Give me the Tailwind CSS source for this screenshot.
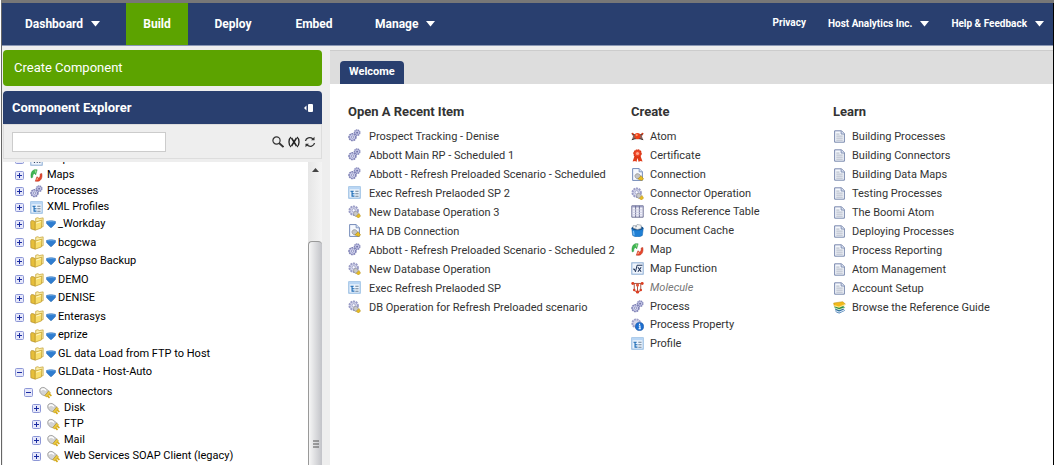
<!DOCTYPE html>
<html lang="en">
<head>
<meta charset="utf-8">
<title>Build</title>
<script src="https://cdn.jsdelivr.net/npm/@tailwindcss/browser@4"></script>
</head>
<body class="bg-white font-['Roboto','Liberation_Sans',sans-serif] text-[11px] text-[#333]">
<svg class="hidden" aria-hidden="true">
  <symbol id="gears" viewBox="0 0 16 16">
    <circle cx="11.200" cy="4.500" r="3.300" fill="#c3c5e6" stroke="#8487ba" stroke-width="1.800" stroke-dasharray="1.700 .6"/>
    <circle cx="5.500" cy="10" r="4.200" fill="#cdcfeb" stroke="#8083b6" stroke-width="2" stroke-dasharray="2.200 .8"/>
    <circle cx="11.200" cy="4.500" r="1.100" fill="#6a6da3"/><circle cx="5.500" cy="10" r="1.400" fill="#f2f2fb" stroke="#7477ad" stroke-width=".8"/>
  </symbol>
  <symbol id="profile" viewBox="0 0 16 16">
    <rect x="1" y="1" width="14" height="14" fill="#eaf3fd" stroke="#86b2de" stroke-width="1.200"/>
    <path d="M1 1h14v3H1z" fill="#b9d6f4"/>
    <path d="M3 6.500h4M5 6.500v6h3M5 9.500h3" stroke="#1d6bb5" stroke-width="1.400" fill="none"/>
    <path d="M9 6.500h4M9 9.500h4M9 12.500h4" stroke="#6d8298" stroke-width="1.300"/>
  </symbol>
  <symbol id="plug" viewBox="0 0 16 16">
    <path d="M.8 5.500c0-3 3-4.500 6-3.500L12 6l-5 6C3 11 .8 8.500.8 5.500z" fill="#d3d3d3" stroke="#9a9a9a"/>
    <path d="M2.500 5.500C4 3 6 3.500 8.500 5.500" stroke="#fff" stroke-width="1.800" fill="none"/>
    <path d="M7 12l5-6 2.200 2.500-4.500 5z" fill="#ecc93a" stroke="#a4841a" stroke-width=".6"/>
    <path d="M12.500 10l2.800 2.300M10.500 12.200l2.500 2.500" stroke="#d6aa18" stroke-width="2"/>
  </symbol>
  <symbol id="operation" viewBox="0 0 16 16">
    <circle cx="7" cy="7" r="5.200" fill="#d4d6ea" stroke="#9a9cc6" stroke-width="2.400" stroke-dasharray="2.400 .9"/>
    <circle cx="7" cy="6.500" r="2" fill="#fafaff" stroke="#9a9cc4"/>
    <path d="M7 9.500c1-2 3-2 4.500-.5L13 11l-3 3c-2 0-3.500-2-3-4.500z" fill="#c8c8c8" stroke="#858585" stroke-width=".7"/>
    <path d="M10 14l3.500-3.500 2 3L13 16z" fill="#e8bd22" stroke="#a47e10" stroke-width=".5"/>
  </symbol>
  <symbol id="connection" viewBox="0 0 16 16">
    <path d="M2 .7h8l4 4v10.600H2z" fill="#f6f9fe" stroke="#7189b8" stroke-width="1.200"/>
    <path d="M10 .7v4h4" fill="#d5e0f2" stroke="#7189b8"/>
    <path d="M5 9c1-2.500 4-2.500 5.500-1L12 10l-3.500 3.500C6 13 4.500 11 5 9z" fill="#c5c5c5" stroke="#858585" stroke-width=".8"/>
    <path d="M8.500 13.500L12.500 9.500l3 4-2.500 2z" fill="#e8bd22" stroke="#a47e10" stroke-width=".6"/>
  </symbol>
  <symbol id="map" viewBox="0 0 16 16">
    <path d="M5.500.8C2 2 .5 5.500 1.500 11l1.800-.8C3.200 7.500 4 6 5.500 5.500L7 7.200 8.800 1z" fill="#3fb653" stroke="#23913a" stroke-width=".6"/>
    <path d="M5.500 1.500l2.600.2-1.200 3.800z" fill="#9be08f"/>
    <path d="M10 15.200c3.800-1 5.500-4.700 4.500-9.700l-2 .6c.2 2.900-.5 4.400-2 5L8.500 9.500 6.500 15z" fill="#e6452c" stroke="#b42c14" stroke-width=".6"/>
    <path d="M7.500 14.300l1.300-3.500 1.700 1.500z" fill="#ffb08d"/>
  </symbol>
  <symbol id="folder" viewBox="0 0 16 16">
    <path d="M6.500 1.500l2.500-.7 1.500 1L15 1v10l-8.500 2z" fill="#fbeea6" stroke="#c8a53e" stroke-width=".9"/>
    <path d="M.8 5.500l1-1.500 3.200.5 1 1.500V15L1 13.500z" fill="#e6be3a" stroke="#b08d28" stroke-width=".8"/>
    <path d="M6 5.800L13.500 3.500 13 12.500 6 15z" fill="#f8de6c" stroke="#c09b2c" stroke-width=".8"/>
    <path d="M7 7l5.300-1.700" stroke="#fffbd9"/>
  </symbol>
  <symbol id="drop" viewBox="0 0 10 8">
    <path d="M.5 1.500C2.500.6 7.500.6 9.500 1.500c.3 1.500-.2 2.500-1 3L5.800 7.300c-.5.400-1.100.4-1.600 0L1.500 4.500c-.8-.5-1.300-1.500-1-3z" fill="#2f7dd0" stroke="#2364ae" stroke-width=".5"/>
    <path d="M1.500 1.900c2-.5 5-.5 7 0" stroke="#6aa8e6" stroke-width=".8" fill="none"/>
  </symbol>
  <symbol id="plus" viewBox="0 0 9 9">
    <rect x=".5" y=".5" width="8" height="8" rx="1" fill="#e6e8fa" stroke="#8d97d6"/>
    <path d="M2 4.500h5M4.500 2v5" stroke="#1a2ba0"/>
  </symbol>
  <symbol id="minus" viewBox="0 0 9 9">
    <rect x=".5" y=".5" width="8" height="8" rx="1" fill="#e6e8fa" stroke="#8d97d6"/>
    <path d="M2 4.500h5" stroke="#1a2ba0"/>
  </symbol>
  <symbol id="atom" viewBox="0 0 16 16">
    <path d="M1 4l4 1.500h6L15 4l-1.500 4 1.500 4-4-1H5l-4 1 1.500-4z" fill="#6b4038" opacity=".8"/>
    <path d="M1 4.500c4 2.500 10 2.500 14 0M1 12c4-2 10-2 14 0" stroke="#3f3431" stroke-width="1.200" fill="none"/>
    <circle cx="8" cy="7.500" r="3.800" fill="#ee4119"/><circle cx="7" cy="6.300" r="1.400" fill="#ff9c6b"/>
    <circle cx="2" cy="4.500" r="1.200" fill="#dc3b16"/><circle cx="14" cy="4.500" r="1.200" fill="#dc3b16"/>
  </symbol>
  <symbol id="certificate" viewBox="0 0 16 16">
    <path d="M4.500 8L2 15.500l3.200-.8 1.500 1.300L8 11l1.500 5 1.700-1.300 3 .8L11.500 8z" fill="#e03c1a"/>
    <circle cx="8" cy="5.500" r="4.400" fill="#f0482a" stroke="#d5300f" stroke-width="1.600" stroke-dasharray="2 .6"/>
    <circle cx="8" cy="5.500" r="1.900" fill="#ffa88d"/>
  </symbol>
  <symbol id="grid" viewBox="0 0 16 16">
    <path d="M1 1h14v14H1z" fill="#f3f3fb" stroke="#6b6e93" stroke-width="1.200"/>
    <path d="M1 1h14v2H1z" fill="#9a9cc0"/>
    <path d="M5.700 1v14M10.300 1v14" stroke="#6b6e93" stroke-width="1.200"/>
    <path d="M1 6h14M1 9h14M1 12h14" stroke="#c4c5dc"/>
  </symbol>
  <symbol id="cache" viewBox="0 0 16 16">
    <path d="M.8 5l1.200 9c2 2.300 10 2.300 12 0L15.200 5z" fill="#1f7fd4" stroke="#1262ab" stroke-width=".6"/>
    <ellipse cx="8" cy="5" rx="7.200" ry="2.800" fill="#134f8c"/>
    <path d="M2.500 5V2H6v2l1.500-3.500 5 1V5.500L8 6.800z" fill="#f4f4f4" stroke="#7f8c99" stroke-width=".7"/>
    <path d="M3 8.500l.8 5.500" stroke="#7cc0f7" stroke-width="1.500"/>
  </symbol>
  <symbol id="function" viewBox="0 0 16 16">
    <rect x="1" y="1" width="14" height="14" fill="#eef4fc" stroke="#86a8d2" stroke-width="1.200"/>
    <path d="M2.500 9l1.500-.5L5.500 12 7.500 4H14" stroke="#1c2f55" stroke-width="1.200" fill="none"/>
    <path d="M8.500 6.500l4 5.500M12.500 6.500l-4 5.500" stroke="#1c2f55" stroke-width="1.300"/>
  </symbol>
  <symbol id="molecule" viewBox="0 0 16 16">
    <path d="M2 3h12M4 3v8M12 3v8M8 3v11M3 11l5 3 5-3" stroke="#a35444" stroke-width="1.200" fill="none"/>
    <circle cx="2.200" cy="3" r="1.800" fill="#dc3d20"/><circle cx="13.800" cy="3" r="1.800" fill="#dc3d20"/><circle cx="8" cy="5" r="2" fill="#e9573a"/>
    <circle cx="4" cy="11" r="1.500" fill="#dc3d20"/><circle cx="12" cy="11" r="1.500" fill="#dc3d20"/><circle cx="8" cy="13.500" r="2" fill="#dc3d20"/>
  </symbol>
  <symbol id="property" viewBox="0 0 16 16">
    <circle cx="6.500" cy="6.500" r="4.800" fill="#d4d6ea" stroke="#9fa1c9" stroke-width="2.400" stroke-dasharray="2.400 .8"/>
    <circle cx="10.500" cy="10.500" r="5" fill="#1e6fd0" stroke="#0f4d9d" stroke-width=".7"/>
    <path d="M10.500 7v1.600M9.500 9.800h1.500v3.200M9.300 13.200h2.800" stroke="#fff" stroke-width="1.400" fill="none"/>
  </symbol>
  <symbol id="doc" viewBox="0 0 16 16">
    <path d="M2 1h8.500L14 4.500V15H2z" fill="#f4f7fc" stroke="#7585ab" stroke-width="1.200"/>
    <path d="M10 1v4h4" fill="#d5ddee" stroke="#7585ab"/>
    <path d="M4 5h4M4 7.500h8M4 10h8M4 12.500h8" stroke="#9ea6b6"/>
  </symbol>
  <symbol id="books" viewBox="0 0 16 16">
    <path d="M2.500 10l10-1 2 3-7 3.500-4-2z" fill="#2563a5"/><path d="M3 11l4.500 2 6-2.500v1.500L7.500 14.500 3 12.500z" fill="#dceaf5"/>
    <path d="M1.500 6.500l10-1L15 8l-7.500 3.800-5-2.300z" fill="#2f8f4e"/><path d="M2.500 8L7.500 10.200l7-2.500v1.300L7.500 11.500l-5-2.200z" fill="#d5ecd3"/>
    <path d="M.8 2.500L12 .8l3.200 3-7.700 4L1.500 6z" fill="#f2b91a" stroke="#b98a0b" stroke-width=".6"/><path d="M1.500 5l5.800 1.800 7.500-3v1.300L7.500 8.300 1.500 6.500z" fill="#ffe78a"/>
  </symbol>
  <symbol id="caret" viewBox="0 0 9 6"><path d="M0 0h9L4.500 5.500z" fill="#fff"/></symbol>
</svg>

<div class="ml-px mr-[3px] flex h-screen flex-col pb-[3px]">
  <div class="h-[3px] shrink-0 bg-[#777]"></div>
  <div class="flex min-h-0 flex-1 flex-col border-l border-r border-l-[#666] border-r-black bg-[#eee]">

    <header class="flex h-[43px] shrink-0 justify-between border-b border-[#8b98b4] bg-[#293f6f] font-bold text-white">
      <nav class="flex text-[12px] leading-[42px]">
        <a href="#" class="flex w-[124px] items-center gap-2 pl-[23px]">Dashboard <svg class="h-[6px] w-[9px]"><use href="#caret"/></svg></a>
        <a href="#" class="w-[62px] bg-[#5ca300] text-center">Build</a>
        <a href="#" class="w-[90px] text-center">Deploy</a>
        <a href="#" class="w-[72px] text-center">Embed</a>
        <a href="#" class="flex items-center gap-2 pl-[25px]">Manage <svg class="h-[6px] w-[9px]"><use href="#caret"/></svg></a>
      </nav>
      <nav class="flex gap-[22px] pr-[9px] text-[10px] leading-[40px]">
        <a href="#">Privacy</a>
        <a href="#" class="flex items-center gap-2">Host Analytics Inc. <svg class="h-[6px] w-[9px]"><use href="#caret"/></svg></a>
        <a href="#" class="flex items-center gap-2">Help &amp; Feedback <svg class="h-[6px] w-[9px]"><use href="#caret"/></svg></a>
      </nav>
    </header>

    <div class="flex min-h-0 flex-1 gap-2">
      <aside class="ml-px flex w-[319px] shrink-0 flex-col pt-1">
        <button type="button" class="h-9 shrink-0 rounded bg-[#5ca300] pl-[11px] text-left text-[13px] text-white">Create Component</button>
        <div class="mt-[5px] flex h-[33px] shrink-0 items-center justify-between rounded-t bg-[#293f6f] pr-2 pl-[9px] text-white">
          <h2 class="text-[13px] font-bold">Component Explorer</h2>
          <button type="button" aria-label="Collapse panel"><svg class="h-2 w-[10px]" viewBox="0 0 10 8"><path d="M2.500 1.500v5L0 4z" fill="#fff"/><rect x="4" width="5" height="8" rx="1" fill="#fff"/></svg></button>
        </div>
        <div class="flex h-[35px] shrink-0 items-center justify-between border border-[#ddd] pr-[5px] pl-2">
          <input type="text" aria-label="Search components" class="h-5 w-[154px] border border-[#ccc] bg-white px-1 outline-none">
          <div class="flex gap-1">
            <button type="button" aria-label="Search"><svg class="size-3" viewBox="0 0 12 12" fill="none" stroke="#333"><circle cx="4.500" cy="4.500" r="3.600" stroke-width="1.200"/><path d="M7 7l4.500 4" stroke-width="1.800"/></svg></button>
            <button type="button" aria-label="Clear search"><svg class="size-3" viewBox="0 0 12 12" fill="none" stroke="#222"><path d="M3 1C.3 3 .3 9 3 11M9 1c2.700 2 2.700 8 0 10" stroke-width="1.300"/><path d="M3.500 2l5 8M8.500 2l-5 8" stroke-width="1.500"/></svg></button>
            <button type="button" aria-label="Refresh"><svg class="size-3" viewBox="0 0 12 12" fill="none" stroke="#333" stroke-width="1.300"><path d="M1.500 5C2 2 6 .5 9 3M10.500 7C10 10 6 11.500 3 9"/><path d="M10.500.8v3.400H7zM1.500 11.200V7.800H5z" fill="#333" stroke="none"/></svg></button>
          </div>
        </div>
        <div class="mt-[3px] flex min-h-0 flex-1 bg-white">
          <div class="min-w-0 flex-1 overflow-hidden text-black">
            <ul class="-mt-[11px] pl-3 leading-4">
              <li class="flex h-4 items-center"><svg class="mr-[6px] size-[9px]"><use href="#plus"/></svg><svg class="mr-1 size-[13px]"><use href="#function"/></svg>Map Functions</li>
              <li class="flex h-4 items-center"><svg class="mr-[6px] size-[9px]"><use href="#plus"/></svg><svg class="mr-1 size-[13px]"><use href="#map"/></svg>Maps</li>
              <li class="flex h-4 items-center"><svg class="mr-[6px] size-[9px]"><use href="#plus"/></svg><svg class="mr-1 size-[13px]"><use href="#gears"/></svg>Processes</li>
              <li class="flex h-4 items-center"><svg class="mr-[6px] size-[9px]"><use href="#plus"/></svg><svg class="mr-1 size-[13px]"><use href="#profile"/></svg>XML Profiles</li>
            </ul>
            <ul class="grid h-[167px] auto-rows-fr pl-3">
              <li class="flex items-center"><svg class="mr-[6px] size-[9px]"><use href="#plus"/></svg><svg class="mr-[2px] size-[14px]"><use href="#folder"/></svg><svg class="mr-[2px] h-2 w-[10px]"><use href="#drop"/></svg>_Workday</li>
              <li class="flex items-center"><svg class="mr-[6px] size-[9px]"><use href="#plus"/></svg><svg class="mr-[2px] size-[14px]"><use href="#folder"/></svg><svg class="mr-[2px] h-2 w-[10px]"><use href="#drop"/></svg>bcgcwa</li>
              <li class="flex items-center"><svg class="mr-[6px] size-[9px]"><use href="#plus"/></svg><svg class="mr-[2px] size-[14px]"><use href="#folder"/></svg><svg class="mr-[2px] h-2 w-[10px]"><use href="#drop"/></svg>Calypso Backup</li>
              <li class="flex items-center"><svg class="mr-[6px] size-[9px]"><use href="#plus"/></svg><svg class="mr-[2px] size-[14px]"><use href="#folder"/></svg><svg class="mr-[2px] h-2 w-[10px]"><use href="#drop"/></svg>DEMO</li>
              <li class="flex items-center"><svg class="mr-[6px] size-[9px]"><use href="#plus"/></svg><svg class="mr-[2px] size-[14px]"><use href="#folder"/></svg><svg class="mr-[2px] h-2 w-[10px]"><use href="#drop"/></svg>DENISE</li>
              <li class="flex items-center"><svg class="mr-[6px] size-[9px]"><use href="#plus"/></svg><svg class="mr-[2px] size-[14px]"><use href="#folder"/></svg><svg class="mr-[2px] h-2 w-[10px]"><use href="#drop"/></svg>Enterasys</li>
              <li class="flex items-center"><svg class="mr-[6px] size-[9px]"><use href="#plus"/></svg><svg class="mr-[2px] size-[14px]"><use href="#folder"/></svg><svg class="mr-[2px] h-2 w-[10px]"><use href="#drop"/></svg>eprize</li>
              <li class="flex items-center pl-[15px]"><svg class="mr-[2px] size-[14px]"><use href="#folder"/></svg><svg class="mr-[2px] h-2 w-[10px]"><use href="#drop"/></svg>GL data Load from FTP to Host</li>
              <li class="flex items-center"><svg class="mr-[6px] size-[9px]"><use href="#minus"/></svg><svg class="mr-[2px] size-[14px]"><use href="#folder"/></svg><svg class="mr-[2px] h-2 w-[10px]"><use href="#drop"/></svg>GLData - Host-Auto</li>
            </ul>
            <ul class="mt-[2px] pl-[21px] leading-4">
              <li class="flex h-4 items-center"><svg class="mr-[6px] size-[9px]"><use href="#minus"/></svg><svg class="mr-1 size-[13px]"><use href="#plug"/></svg>Connectors</li>
              <li class="flex h-4 items-center pl-2"><svg class="mr-[6px] size-[9px]"><use href="#plus"/></svg><svg class="mr-1 size-[13px]"><use href="#plug"/></svg>Disk</li>
              <li class="flex h-4 items-center pl-2"><svg class="mr-[6px] size-[9px]"><use href="#plus"/></svg><svg class="mr-1 size-[13px]"><use href="#plug"/></svg>FTP</li>
              <li class="flex h-4 items-center pl-2"><svg class="mr-[6px] size-[9px]"><use href="#plus"/></svg><svg class="mr-1 size-[13px]"><use href="#plug"/></svg>Mail</li>
              <li class="flex h-4 items-center pl-2"><svg class="mr-[6px] size-[9px]"><use href="#plus"/></svg><svg class="mr-1 size-[13px]"><use href="#plug"/></svg>Web Services SOAP Client (legacy)</li>
            </ul>
          </div>
          <div class="flex w-[14px] shrink-0 flex-col bg-gradient-to-r from-[#e6e6e6] to-[#f4f4f4]">
            <div class="flex h-4 items-center justify-center"><svg class="h-1 w-[7px]" viewBox="0 0 7 4"><path d="M3.500 0L7 4H0z" fill="#444"/></svg></div>
            <div class="h-[63px]"></div>
            <div class="flex flex-1 flex-col items-center justify-end rounded-t-sm border-t border-l border-[#999] bg-gradient-to-r from-[#f6f6f6] to-[#c2c3c8] pb-[17px]">
              <svg class="h-[8px] w-[6px]" viewBox="0 0 6 8"><path d="M0 1h6M0 4h6M0 7h6" stroke="#555"/></svg>
            </div>
          </div>
        </div>
      </aside>

      <main class="flex min-w-0 flex-1 flex-col pt-1">
        <div class="flex h-[34px] shrink-0 items-end border-t border-[#ccc] bg-[#ddd] pl-[10px]">
          <a href="#" class="h-[23px] rounded-t bg-[#293f6f] px-[9px] text-[11px] leading-[22px] font-bold text-white">Welcome</a>
        </div>
        <div class="flex flex-1 bg-white pt-5 pl-[18px]">
          <section class="w-[283px] shrink-0">
            <h2 class="mb-[7px] text-[13px] leading-4 font-bold">Open A Recent Item</h2>
            <ul class="leading-[19px]">
              <li><a href="#" class="flex items-center gap-2"><svg class="mb-[2px] size-[13px]"><use href="#gears"/></svg>Prospect Tracking - Denise</a></li>
              <li><a href="#" class="flex items-center gap-2"><svg class="mb-[2px] size-[13px]"><use href="#gears"/></svg>Abbott Main RP - Scheduled 1</a></li>
              <li><a href="#" class="flex items-center gap-2"><svg class="mb-[2px] size-[13px]"><use href="#gears"/></svg>Abbott - Refresh Preloaded Scenario - Scheduled</a></li>
              <li><a href="#" class="flex items-center gap-2"><svg class="mb-[2px] size-[13px]"><use href="#profile"/></svg>Exec Refresh Prelaoded SP 2</a></li>
              <li><a href="#" class="flex items-center gap-2"><svg class="mb-[2px] size-[13px]"><use href="#operation"/></svg>New Database Operation 3</a></li>
              <li><a href="#" class="flex items-center gap-2"><svg class="mb-[2px] size-[13px]"><use href="#connection"/></svg>HA DB Connection</a></li>
              <li><a href="#" class="flex items-center gap-2"><svg class="mb-[2px] size-[13px]"><use href="#gears"/></svg>Abbott - Refresh Preloaded Scenario - Scheduled 2</a></li>
              <li><a href="#" class="flex items-center gap-2"><svg class="mb-[2px] size-[13px]"><use href="#operation"/></svg>New Database Operation</a></li>
              <li><a href="#" class="flex items-center gap-2"><svg class="mb-[2px] size-[13px]"><use href="#profile"/></svg>Exec Refresh Prelaoded SP</a></li>
              <li><a href="#" class="flex items-center gap-2"><svg class="mb-[2px] size-[13px]"><use href="#operation"/></svg>DB Operation for Refresh Preloaded scenario</a></li>
            </ul>
          </section>
          <section class="w-[202px] shrink-0">
            <h2 class="mb-[7px] text-[13px] leading-4 font-bold">Create</h2>
            <ul class="grid h-[226px] auto-rows-fr">
              <li><a href="#" class="flex items-center gap-[6px] leading-[19px]"><svg class="size-[13px]"><use href="#atom"/></svg>Atom</a></li>
              <li><a href="#" class="flex items-center gap-[6px] leading-[19px]"><svg class="size-[13px]"><use href="#certificate"/></svg>Certificate</a></li>
              <li><a href="#" class="flex items-center gap-[6px] leading-[19px]"><svg class="size-[13px]"><use href="#connection"/></svg>Connection</a></li>
              <li><a href="#" class="flex items-center gap-[6px] leading-[19px]"><svg class="size-[13px]"><use href="#operation"/></svg>Connector Operation</a></li>
              <li><a href="#" class="flex items-center gap-[6px] leading-[19px]"><svg class="size-[13px]"><use href="#grid"/></svg>Cross Reference Table</a></li>
              <li><a href="#" class="flex items-center gap-[6px] leading-[19px]"><svg class="size-[13px]"><use href="#cache"/></svg>Document Cache</a></li>
              <li><a href="#" class="flex items-center gap-[6px] leading-[19px]"><svg class="size-[13px]"><use href="#map"/></svg>Map</a></li>
              <li><a href="#" class="flex items-center gap-[6px] leading-[19px]"><svg class="size-[13px]"><use href="#function"/></svg>Map Function</a></li>
              <li><a href="#" class="flex items-center gap-[6px] leading-[19px] text-[#777] italic"><svg class="size-[13px]"><use href="#molecule"/></svg>Molecule</a></li>
              <li><a href="#" class="flex items-center gap-[6px] leading-[19px]"><svg class="size-[13px]"><use href="#gears"/></svg>Process</a></li>
              <li><a href="#" class="flex items-center gap-[6px] leading-[19px]"><svg class="size-[13px]"><use href="#property"/></svg>Process Property</a></li>
              <li><a href="#" class="flex items-center gap-[6px] leading-[19px]"><svg class="size-[13px]"><use href="#profile"/></svg>Profile</a></li>
            </ul>
          </section>
          <section>
            <h2 class="mb-[7px] text-[13px] leading-4 font-bold">Learn</h2>
            <ul class="leading-[19px]">
              <li><a href="#" class="flex items-center gap-[6px]"><svg class="size-[13px]"><use href="#doc"/></svg>Building Processes</a></li>
              <li><a href="#" class="flex items-center gap-[6px]"><svg class="size-[13px]"><use href="#doc"/></svg>Building Connectors</a></li>
              <li><a href="#" class="flex items-center gap-[6px]"><svg class="size-[13px]"><use href="#doc"/></svg>Building Data Maps</a></li>
              <li><a href="#" class="flex items-center gap-[6px]"><svg class="size-[13px]"><use href="#doc"/></svg>Testing Processes</a></li>
              <li><a href="#" class="flex items-center gap-[6px]"><svg class="size-[13px]"><use href="#doc"/></svg>The Boomi Atom</a></li>
              <li><a href="#" class="flex items-center gap-[6px]"><svg class="size-[13px]"><use href="#doc"/></svg>Deploying Processes</a></li>
              <li><a href="#" class="flex items-center gap-[6px]"><svg class="size-[13px]"><use href="#doc"/></svg>Process Reporting</a></li>
              <li><a href="#" class="flex items-center gap-[6px]"><svg class="size-[13px]"><use href="#doc"/></svg>Atom Management</a></li>
              <li><a href="#" class="flex items-center gap-[6px]"><svg class="size-[13px]"><use href="#doc"/></svg>Account Setup</a></li>
              <li><a href="#" class="flex items-center gap-[6px]"><svg class="size-[13px]"><use href="#books"/></svg>Browse the Reference Guide</a></li>
            </ul>
          </section>
        </div>
      </main>
    </div>
  </div>
</div>
</body>
</html>
